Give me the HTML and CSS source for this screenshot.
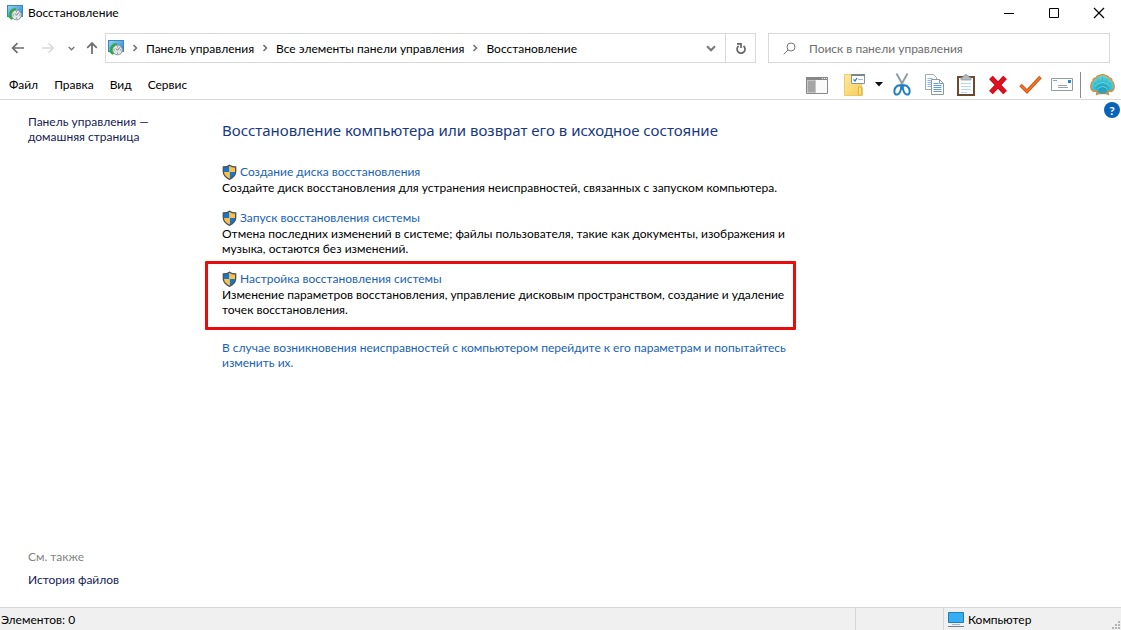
FILE: index.html
```html
<!DOCTYPE html>
<html lang="ru">
<head>
<meta charset="utf-8">
<title>Восстановление</title>
<link rel="stylesheet" href="styles.css">
</head>
<body>
<svg class="defs" aria-hidden="true">
  <defs>
    <linearGradient id="screen" x1="0" y1="0" x2="1" y2="1"><stop offset="0" stop-color="#9bd3f3"/><stop offset="1" stop-color="#1f7fcb"/></linearGradient>
    <linearGradient id="folder" x1="0" y1="0" x2="1" y2="1"><stop offset="0" stop-color="#ffe9a0"/><stop offset="1" stop-color="#f5cd59"/></linearGradient>
    <radialGradient id="sea" cx=".5" cy=".7" r=".6"><stop offset="0" stop-color="#1590b4"/><stop offset=".6" stop-color="#35c3d3"/><stop offset="1" stop-color="#6bd0c8"/></radialGradient>
    <clipPath id="shield-clip"><path d="M7.500 1.200C9.500 2.800 11.500 3 13.700 3v4.500c0 3.500-2.600 6.200-6.200 7.800C3.900 13.700 1.300 11 1.300 7.500V3c2.200 0 4.200-.2 6.200-1.800z"/></clipPath>
    <symbol id="recovery" viewBox="0 0 16 16">
      <rect x=".5" y=".5" width="15" height="11" fill="url(#screen)" stroke="#3788c0"/>
      <path d="M9 3.500A5.500 5.500 0 0 0 2.500 10.500L.3 11l4 3.800L8 13l-2-2a3.200 3.200 0 0 1 3-4.500z" fill="#22ad43"/>
      <circle cx="9.500" cy="10" r="4.900" fill="#e2e4e5" stroke="#8b959a"/>
      <path d="M9.500 6.300v1m0 5.400v1M5.800 10h1m5.400 0h1M8 8.500l1.500 1.800 2.500-3" fill="none" stroke="#737c82"/>
    </symbol>
    <symbol id="shield" viewBox="0 0 15 16">
      <g clip-path="url(#shield-clip)"><path fill="#1676cc" d="M0 0h7.500v8H0zM7.500 8H15v8H7.500z"/><path fill="#fdc040" d="M7.500 0H15v8H7.500zM0 8h7.500v8H0z"/></g>
      <path d="M7.500 1.200C9.500 2.800 11.500 3 13.700 3v4.500c0 3.500-2.600 6.200-6.200 7.800C3.900 13.700 1.300 11 1.300 7.500V3c2.200 0 4.200-.2 6.200-1.800z" fill="none" stroke="#4b5257" stroke-width="1.300"/>
    </symbol>
    <symbol id="crumb" viewBox="0 0 6 8"><path d="M1.500 1l3 3-3 3" fill="none" stroke="#6d6d6d" stroke-width="1.500"/></symbol>
    <symbol id="down" viewBox="0 0 10 7"><path d="M1 1.300l4 4 4-4" fill="none" stroke="#777" stroke-width="2"/></symbol>
  </defs>
</svg>
<div class="window">
  <header class="titlebar">
    <svg class="icon16"><use href="#recovery"/></svg>
    <h1 class="title">Восстановление</h1>
    <div class="captions">
      <button class="caption" aria-label="Свернуть"><svg width="12" height="12"><path d="M1 6.500h10" stroke="#000"/></svg></button>
      <button class="caption" aria-label="Развернуть"><svg width="12" height="12"><path d="M1.500 1.500h9v9h-9z" fill="none" stroke="#000"/></svg></button>
      <button class="caption" aria-label="Закрыть"><svg width="12" height="12"><path d="M1 1l10 10M11 1L1 11" stroke="#000" stroke-width="1.200"/></svg></button>
    </div>
  </header>

  <div class="navbar">
    <div class="history">
      <button class="plain step" aria-label="Назад"><svg width="14" height="12"><path d="M13 6H2M6.500 1.200L1.700 6l4.800 4.800" fill="none" stroke="#6c6c6c" stroke-width="1.700"/></svg></button>
      <button class="plain step" aria-label="Вперед"><svg width="14" height="12"><path d="M1 6h11M7.500 1.200L12.300 6l-4.800 4.800" fill="none" stroke="#d8d8d8" stroke-width="1.500"/></svg></button>
      <button class="plain recent" aria-label="Последние расположения"><svg width="7" height="5"><use href="#down"/></svg></button>
      <button class="plain up" aria-label="Вверх"><svg width="12" height="14"><path d="M6 13V2M1.200 6.800L6 2l4.800 4.800" fill="none" stroke="#707070" stroke-width="1.800"/></svg></button>
    </div>
    <nav class="address" aria-label="Адрес">
      <svg class="icon16"><use href="#recovery"/></svg>
      <svg class="crumb"><use href="#crumb"/></svg>
      <a href="#">Панель управления</a>
      <svg class="crumb"><use href="#crumb"/></svg>
      <a href="#">Все элементы панели управления</a>
      <svg class="crumb"><use href="#crumb"/></svg>
      <a href="#">Восстановление</a>
      <button class="plain expand" aria-label="Предыдущие расположения"><svg width="10" height="7"><use href="#down"/></svg></button>
      <button class="plain refresh" aria-label="Обновить"><svg width="12" height="13"><path d="M3.600 4A4 4 0 1 0 8.500 4" fill="none" stroke="#666" stroke-width="1.700"/><path d="M2 1.800h4V6" fill="none" stroke="#666" stroke-width="1.700"/></svg></button>
    </nav>
    <label class="search">
      <svg width="13" height="13"><circle cx="8" cy="5" r="4" fill="none" stroke="#777"/><path d="M5 8L.7 12.300" stroke="#777"/></svg>
      <input type="search" placeholder="Поиск в панели управления" aria-label="Поиск в панели управления">
    </label>
  </div>

  <div class="menubar">
    <nav class="menus">
      <button class="plain">Файл</button><button class="plain">Правка</button><button class="plain">Вид</button><button class="plain">Сервис</button>
    </nav>
    <div class="tools">
      <button class="plain tool" aria-label="Область навигации"><svg width="22" height="18"><path fill="#fafafa" stroke="#888" d="M.5 1.500h21v16H.5z"/><path fill="#888" d="M0 1h22v3H0z"/><path fill="#a5a5a5" stroke="#c4c4c4" d="M1.500 4.500h8v12h-8z"/><path stroke="#eee" d="M16 2.500h1m1 0h1m1 0h1"/></svg></button>
      <div class="split">
        <button class="plain tool" aria-label="Свойства папки"><svg width="22" height="22"><path d="M.5.500h8l1 3h8v9l1 1v8H.5z" fill="url(#folder)" stroke="#edcc67"/><path d="M14.500 21.500v-9l3 1v7z" fill="#ffe38a" stroke="#e0b73e"/><path d="M7.500.500h13v9h-13z" fill="#fff" stroke="#8a949b"/><path d="M7 0h14v2H7z" fill="#7c8790"/><path d="M9.500 5.500L11 7l2-3" fill="none" stroke="#2180d0" stroke-width="1.300"/><path d="M14 5.500h5" stroke="#adb7be"/></svg></button>
        <button class="plain more" aria-label="Другие параметры"><svg width="8" height="5"><path d="M0 0h8L4 4.500z" fill="#111"/></svg></button>
      </div>
      <button class="plain tool" aria-label="Вырезать"><svg width="18" height="23"><path d="M3.500.5L11 14M14.500.5L7 14" stroke="#929da4" stroke-width="2"/><path d="M8.500 12.500C5 11.500 1.500 14 1.300 18c0 3 1.400 3.800 3 3.500 2.500-.5 3.700-4 4.200-9zM9.500 12.500c3.500-1 7 1.500 7.200 5.500 0 3-1.400 3.800-3 3.500-2.500-.5-3.700-4-4.200-9z" fill="none" stroke="#1d7fc1" stroke-width="2"/></svg></button>
      <button class="plain tool" aria-label="Копировать"><svg width="19" height="21"><path d="M.5.500h8l3 3v12H.5z" fill="#fff" stroke="#a0aab0"/><path d="M2.500 4.500h5m-5 2h6m-6 2h6m-6 2h5m-5 2h5" stroke="#8cbce6"/><path d="M6.500 5.500h8l4 4v11h-12z" fill="#fff" stroke="#8b969d"/><path d="M14.500 5.500v4h4" fill="none" stroke="#8b969d"/><path d="M8.500 9.500h5m-5 2h8m-8 2h8m-8 2h8m-8 2h8" stroke="#5a9ede"/></svg></button>
      <button class="plain tool" aria-label="Вставить"><svg width="18" height="22"><path d="M1 3h16v18H1z" fill="#fbfdff" stroke="#6d4930" stroke-width="2"/><path d="M4 3.500h2V2h1.500a1.500 1.500 0 0 1 3 0H12v1.500h2V6H4z" fill="#b5bdc1" stroke="#879197" stroke-width=".7"/><path d="M4 9.500h10m-10 3h10m-10 3h10m-10 3h6" stroke="#b8d6ee"/></svg></button>
      <button class="plain tool" aria-label="Удалить"><svg width="20" height="20"><path d="M3 2.500l14 15M17 2.500l-14 15" stroke="#b4060f" stroke-width="5"/><path d="M3 2.500l14 15M17 2.500l-14 15" stroke="#e01020" stroke-width="4"/></svg></button>
      <button class="plain tool" aria-label="Применить"><svg width="23" height="19"><path d="M1.500 10L8 16.500 21.500 2" fill="none" stroke="#d0551a" stroke-width="3.500"/><path d="M1.500 10L8 16.500 21.500 2" fill="none" stroke="#f27a25" stroke-width="1.500"/></svg></button>
      <button class="plain tool" aria-label="Отправить"><svg width="22" height="14"><path d="M.5.500h21v12H.5z" fill="#fff" stroke="#919ca3"/><path d="M2 2.500h4M7 7.500h9m-9 2h10" stroke="#98a3aa"/><path d="M17 2h3v3h-3z" fill="#2785cf"/></svg></button>
      <span class="rule"></span>
      <button class="plain tool" aria-label="Classic Shell"><svg width="25" height="23"><path d="M6.500 21.500L7 18l-3.500.5C1 17 .5 14 1 12c0-2.500 1-3.500 2-4 0-2 1.500-3 3-3 .5-2 2-2.500 3.500-2.200C10.500 1 14.500 1 15.500 2.800 17 2.500 18.500 3 19 5c1.500 0 3 1 3 3 1 .5 2 1.500 2 4 .5 2 0 5-2.500 6.500L18 18l.5 3.500-3-1h-6z" fill="url(#sea)" stroke="#e08b42" stroke-width="1.300"/><path d="M12.500 18V4M12.500 18L8 6M12.500 18l4.500-12M12.500 18L4 10M12.500 18L21 10" stroke="#2fabc4" stroke-width=".6"/><path d="M5 13q7.500-7 15 0M7.500 16q5-5 10 0" fill="none" stroke="#73dce3" stroke-width=".8"/><path d="M9 18.500h7l-1 2h-5z" fill="#329cb0"/></svg></button>
    </div>
  </div>

  <div class="content">
    <aside class="sidebar">
      <a class="side-link" href="#">Панель управления —<br>домашняя страница</a>
      <div class="see-also">
        <h2 class="muted">См. также</h2>
        <a class="side-link" href="#">История файлов</a>
      </div>
    </aside>
    <main class="main">
      <h2 class="heading">Восстановление компьютера или возврат его в исходное состояние</h2>
      <section class="task">
        <a class="task-link" href="#"><svg class="shield"><use href="#shield"/></svg>Создание диска восстановления</a>
        <p>Создайте диск восстановления для устранения неисправностей, связанных с запуском компьютера.</p>
      </section>
      <section class="task">
        <a class="task-link" href="#"><svg class="shield"><use href="#shield"/></svg>Запуск восстановления системы</a>
        <p>Отмена последних изменений в системе; файлы пользователя, такие как документы, изображения и<br>музыка, остаются без изменений.</p>
      </section>
      <section class="task marked">
        <a class="task-link" href="#"><svg class="shield"><use href="#shield"/></svg>Настройка восстановления системы</a>
        <p>Изменение параметров восстановления, управление дисковым пространством, создание и удаление<br>точек восстановления.</p>
      </section>
      <p class="note"><a href="#">В случае возникновения неисправностей с компьютером перейдите к его параметрам и попытайтесь<br>изменить их.</a></p>
    </main>
    <button class="help" aria-label="Справка">?</button>
  </div>

  <footer class="statusbar">
    <span class="count">Элементов: 0</span>
    <span class="pane"></span>
    <span class="pane zone"><svg width="16" height="15"><path d="M.5.500h15v10H.5z" fill="#35aef5" stroke="#247cb5"/><path d="M4 12.500h8" stroke="#a8b4bc"/><path d="M0 14.500h16" stroke="#73828c"/></svg>Компьютер</span>
    <svg class="grip" width="9" height="9"><path d="M6 0h2v2H6zM3 3h2v2H3zM6 3h2v2H6zM0 6h2v2H0zM3 6h2v2H3zM6 6h2v2H6z" fill="#b5b5b5"/></svg>
  </footer>
</div>
</body>
</html>
```
FILE: styles.css
```css
* { box-sizing: border-box; }
body { margin: 0; font: 12px/15px Lato, "Noto Sans", sans-serif; color: #000; background: #fff; }
h1, h2, p { margin: 0; font-size: 12px; font-weight: 400; }
a { color: inherit; text-decoration: none; }
svg { display: block; flex: none; }
button { font: inherit; color: inherit; cursor: pointer; }
.defs { position: absolute; width: 0; height: 0; }
.plain { display: flex; align-items: center; justify-content: center; padding: 0; border: 0; background: none; }
.icon16 { width: 16px; height: 16px; }
.window { display: flex; flex-direction: column; min-height: 100vh; }

.titlebar { display: flex; align-items: center; height: 25px; padding-left: 7px; gap: 5px; }
.captions { display: flex; margin-left: auto; }
.caption { display: grid; place-items: center; width: 45px; height: 25px; padding: 0; border: 0; background: none; }

.navbar { display: flex; align-items: center; height: 45px; padding: 1px 11px 0 0; }
.history { display: flex; width: 105px; padding-left: 3px; }
.step { width: 30px; height: 30px; }
.recent { width: 17px; }
.up { width: 24px; }
.address { display: flex; flex: 647 1 0; align-items: center; height: 30px; padding-left: 2px; border: 1px solid #d9d9d9; white-space: nowrap; }
.crumb { width: 6px; height: 8px; margin: 0 8px; }
.expand { margin-left: auto; padding: 0 9px; }
.refresh { align-self: stretch; width: 30px; border-left: 1px solid #d9d9d9; }
.search { display: flex; flex: 326 1 0; align-items: center; height: 30px; margin-left: 12px; padding-left: 14px; gap: 13px; border: 1px solid #d9d9d9; }
.search input { flex: 1; min-width: 0; padding: 0; border: 0; outline: 0; background: none; font: inherit; }
.search input::placeholder { color: #6d6d6d; opacity: 1; }

.menubar { display: flex; align-items: center; justify-content: space-between; height: 30px; padding: 0 3px 0 9px; border-bottom: 1px solid #d9d9d9; }
.menus { display: flex; gap: 16px; }
.tools { display: flex; align-items: center; }
.tool { width: 32px; height: 26px; }
.split { display: flex; margin-left: 6px; }
.more { width: 15px; }
.rule { width: 1px; height: 26px; margin: 0 5px 0 2px; background: #8a8a8a; }

.content { display: flex; flex: 1; }
.sidebar { display: flex; flex-direction: column; justify-content: space-between; width: 205px; padding: 14px 0 20px 28px; }
.side-link { color: #151c55; }
.muted { margin-bottom: 8px; color: #838383; }
.main { flex: 1; padding-top: 20px; white-space: nowrap; }
.heading { padding-left: 17px; font-family: "Noto Sans", "Open Sans", sans-serif; font-size: 15px; line-height: 20px; color: #17397f; }
.task { width: 591px; padding: 0 17px; margin-top: 14px; }
.heading + .task { margin-top: 23px; }
.task-link { display: flex; align-items: center; gap: 3px; width: max-content; height: 17px; color: #1862b4; }
.shield { width: 15px; height: 16px; }
.marked { margin-top: 5px; padding: 6px 14px 10px; border: 3px solid #e80c0c; border-radius: 1px; }
.note { padding-left: 17px; margin-top: 10px; color: #1862b4; }
.help { width: 16px; height: 16px; margin: 2px 1px 0 0; padding: 0; border: 0; border-radius: 50%; background: #0964b8; color: #fff; font-weight: 700; }

.statusbar { display: flex; height: 23px; border-top: 1px solid #d7d7d7; background: #f0f0f0; line-height: 23px; }
.count { flex: 1; padding-left: 1px; }
.pane { width: 88px; border-left: 1px solid #d7d7d7; }
.zone { display: flex; align-items: center; width: 169px; padding-left: 4px; gap: 4px; }
.grip { align-self: flex-end; }
```
